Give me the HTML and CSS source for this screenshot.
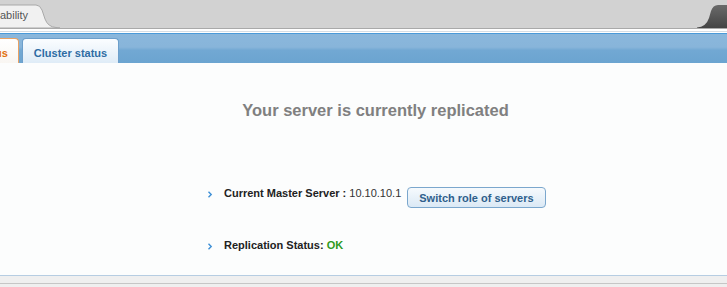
FILE: index.html
```html
<!DOCTYPE html>
<html lang="en">
<head>
  <meta charset="UTF-8">
  <title>High Availability</title>
  <link rel="stylesheet" href="styles.css">
</head>
<body>
  <div class="browser-bar">
    <svg class="browser-tab" width="60" height="28" viewBox="0 0 60 28">
      <path d="M-2 28 L-2 6 Q-2 5 0 5 L36 5 Q40 5 42 10 L45 19 Q48 27 56 27.5 L60 28 Z" fill="#f1f1f1" stroke="#a9a9a9" stroke-width="1"/>
      <text x="0" y="19" class="tab-label">ability</text>
    </svg>
    <svg class="browser-tab-dark" width="30" height="28" viewBox="0 0 30 28">
      <defs>
        <linearGradient id="dark" x1="0" y1="0" x2="0" y2="1">
          <stop offset="0" stop-color="#6a6a6a"/>
          <stop offset="1" stop-color="#444"/>
        </linearGradient>
      </defs>
      <path d="M0 27.5 Q9 27 12 18 L14 11 Q16 5 21 5 L31 5 L31 28 L0 28 Z" fill="url(#dark)"/>
    </svg>
  </div>

  <div class="header-lines"></div>
  <div class="tab-band">
    <div class="tab tab-active">us</div>
    <div class="tab">Cluster status</div>
  </div>

  <div class="content">
    <h1>Your server is currently replicated</h1>
    <ul class="status-list">
      <li class="status-item">
        <svg class="chevron" width="6" height="7" viewBox="0 0 6 7"><polyline points="1.5,0.8 4.2,3.5 1.5,6.2" fill="none" stroke="#3d8fd6" stroke-width="1.4"/></svg>
        <span class="label">Current Master Server :</span>
        <span class="value">10.10.10.1</span>
        <button class="switch-btn">Switch role of servers</button>
      </li>
      <li class="status-item">
        <svg class="chevron" width="6" height="7" viewBox="0 0 6 7"><polyline points="1.5,0.8 4.2,3.5 1.5,6.2" fill="none" stroke="#3d8fd6" stroke-width="1.4"/></svg>
        <span class="label">Replication Status:</span>
        <span class="ok">OK</span>
      </li>
    </ul>
  </div>

  <div class="footer-bar"></div>
</body>
</html>
```

FILE: styles.css
```css
html, body {
  margin: 0;
  padding: 0;
}
body {
  width: 727px;
  height: 287px;
  overflow: hidden;
  font-family: 'Liberation Sans', Arial, sans-serif;
  background: #efefef;
}
.browser-bar {
  height: 28px;
  background: #d2d2d2;
  display: flex;
  justify-content: space-between;
}
.browser-tab, .browser-tab-dark {
  display: block;
}
.tab-label {
  font-family: 'Liberation Sans', Arial, sans-serif;
  font-size: 11px;
  fill: #555;
}
.header-lines {
  border-top: 1px solid #a9a9a9;
  background: linear-gradient(#fff 0, #fff 2px, #d6dde4 2px, #d6dde4 3px, #fff 3px);
  border-bottom: 1px solid #4a9ad9;
  box-sizing: border-box;
  height: 6px;
}
.tab-band {
  height: 29px;
  display: flex;
  align-items: flex-end;
  gap: 3px;
  background: linear-gradient(#8ab7dc 0, #88b5da 45%, #72a8d3 56%, #6ba4d0 100%);
}
.tab {
  height: 25px;
  box-sizing: border-box;
  padding: 8px 11px 0;
  font-size: 11px;
  font-weight: bold;
  color: #2e6ca3;
  background: linear-gradient(#fbfdff, #dfecf7);
  border: 1px solid #6d9fcb;
  border-bottom: none;
  border-radius: 4px 4px 0 0;
  line-height: 13px;
}
.tab-active {
  margin-left: -5px;
  padding-left: 0;
  padding-right: 10px;
  border-left: none;
  border-radius: 0 4px 0 0;
  border-color: #e9a264;
  color: #e2700f;
  background: linear-gradient(#fff, #f9f6f2);
}
.content {
  height: 212px;
  background: #fcfdfd;
  border-bottom: 1px solid #b6cde2;
}
.content h1 {
  margin: 0;
  padding: 38px 0 0 24px;
  text-align: center;
  font-size: 16.5px;
  line-height: 19px;
  color: #808080;
}
.status-list {
  list-style: none;
  margin: 67px 0 0;
  padding: 0 0 0 207px;
  display: flex;
  flex-direction: column;
  gap: 31px;
}
.status-item {
  display: flex;
  align-items: flex-start;
  font-size: 11px;
  line-height: 13px;
  color: #222;
}
.chevron {
  margin: 4px 11px 0 0;
  flex: none;
}
.label {
  font-weight: bold;
}
.value {
  margin-left: 3px;
  color: #333;
}
.ok {
  margin-left: 3px;
  font-weight: bold;
  color: #2e9a1c;
}
.switch-btn {
  margin-left: 6px;
  padding: 4px 11px 2px;
  font-family: 'Liberation Sans', Arial, sans-serif;
  font-size: 11px;
  line-height: 13px;
  font-weight: bold;
  color: #2f5f8c;
  background: linear-gradient(#f6fafd, #dbe9f5);
  border: 1px solid #7ba7cd;
  border-radius: 4px;
  cursor: pointer;
}
.footer-bar {
  height: 7px;
  border-bottom: 1px solid #c6c6c6;
  background: #efefef;
}
```
